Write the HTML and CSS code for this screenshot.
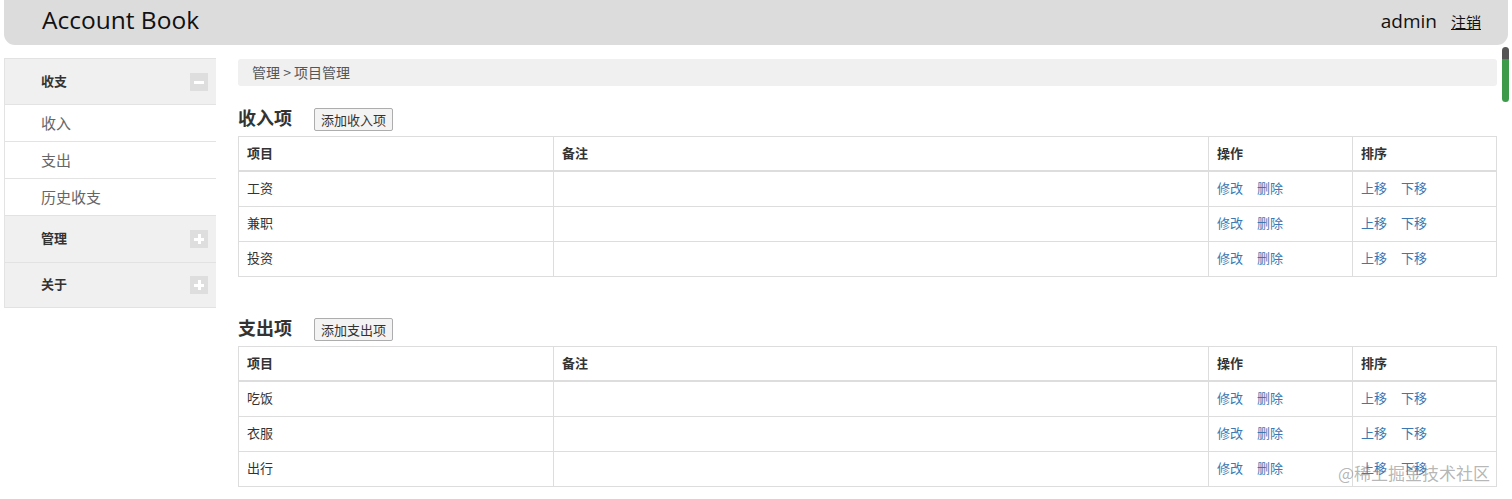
FILE: index.html
```html
<!DOCTYPE html>
<html lang="zh">
<head>
<meta charset="utf-8">
<title>Account Book</title>
<link rel="stylesheet" href="styles.css">
</head>
<body>
<header class="topbar">
  <div class="brand">Account Book</div>
  <div class="user">
    <span class="username">admin</span>
    <a class="logout" href="#">注销</a>
  </div>
</header>
<div class="scroll-thumb"></div>
<div class="layout">
  <aside class="sidebar">
    <div class="group">
      <div class="group-head"><span>收支</span><span class="toggle minus"></span></div>
      <a class="item" href="#">收入</a>
      <a class="item" href="#">支出</a>
      <a class="item" href="#">历史收支</a>
    </div>
    <div class="group">
      <div class="group-head"><span>管理</span><span class="toggle plus"></span></div>
    </div>
    <div class="group">
      <div class="group-head"><span>关于</span><span class="toggle plus"></span></div>
    </div>
  </aside>
  <main class="content">
    <div class="crumb">管理 &gt; 项目管理</div>

    <section class="block">
      <div class="block-head">
        <h2>收入项</h2>
        <button class="btn">添加收入项</button>
      </div>
      <table class="grid">
        <colgroup><col class="c1"><col class="c2"><col class="c3"><col class="c4"></colgroup>
        <thead><tr><th>项目</th><th>备注</th><th>操作</th><th>排序</th></tr></thead>
        <tbody>
          <tr><td>工资</td><td></td><td><a href="#">修改</a><a href="#">删除</a></td><td><a href="#">上移</a><a href="#">下移</a></td></tr>
          <tr><td>兼职</td><td></td><td><a href="#">修改</a><a href="#">删除</a></td><td><a href="#">上移</a><a href="#">下移</a></td></tr>
          <tr><td>投资</td><td></td><td><a href="#">修改</a><a href="#">删除</a></td><td><a href="#">上移</a><a href="#">下移</a></td></tr>
        </tbody>
      </table>
    </section>

    <section class="block second">
      <div class="block-head">
        <h2>支出项</h2>
        <button class="btn">添加支出项</button>
      </div>
      <table class="grid">
        <colgroup><col class="c1"><col class="c2"><col class="c3"><col class="c4"></colgroup>
        <thead><tr><th>项目</th><th>备注</th><th>操作</th><th>排序</th></tr></thead>
        <tbody>
          <tr><td>吃饭</td><td></td><td><a href="#">修改</a><a href="#">删除</a></td><td><a href="#">上移</a><a href="#">下移</a></td></tr>
          <tr><td>衣服</td><td></td><td><a href="#">修改</a><a href="#">删除</a></td><td><a href="#">上移</a><a href="#">下移</a></td></tr>
          <tr><td>出行</td><td></td><td><a href="#">修改</a><a href="#">删除</a></td><td><a href="#">上移</a><a href="#">下移</a></td></tr>
        </tbody>
      </table>
    </section>
  </main>
</div>
<div class="watermark">@稀土掘金技术社区</div>
</body>
</html>
```
FILE: styles.css
```css
html, body {
  margin: 0;
  padding: 0;
  background: #fff;
  overflow: hidden;
  height: 499px;
}
body {
  font-family: "Open Sans", "Noto Sans CJK SC", sans-serif;
  color: #333;
  position: relative;
}
a { text-decoration: none; }

.topbar {
  margin: 0 4px 0 4px;
  height: 45px;
  background: #dcdcdc;
  border-radius: 0 0 11px 11px;
  display: flex;
  align-items: center;
  justify-content: space-between;
  padding: 0 27px 0 38px;
}
.brand {
  font-size: 24.5px;
  color: #111;
  margin-top: -6px;
  font-family: "Open Sans", sans-serif;
}
.user {
  display: flex;
  align-items: baseline;
  gap: 14px;
  margin-top: -4px;
}
.username {
  font-size: 19px;
  color: #111;
}
.logout {
  font-family: "Noto Sans CJK SC", sans-serif;
  font-size: 15px;
  color: #111;
  text-decoration: underline;
}

.scroll-thumb {
  position: absolute;
  left: 1502px;
  top: 47px;
  width: 7px;
  height: 55px;
  border-radius: 4px;
  background: linear-gradient(#555 0, #555 12px, #3d9a4a 12px, #3d9a4a 100%);
}

.layout {
  display: flex;
  align-items: flex-start;
  margin-top: 13px;
  padding-left: 4px;
  gap: 22px;
}
.sidebar {
  width: 211px;
  flex: none;
  border-left: 1px solid #e3e3e3;
  font-family: "Noto Sans CJK SC", sans-serif;
}
.group-head {
  height: 45px;
  box-sizing: border-box;
  padding: 0 8px 3px 36px;
  background: #f0f0f0;
  border-top: 1px solid #e2e2e2;
  display: flex;
  align-items: center;
  justify-content: space-between;
  font-size: 13px;
  font-weight: bold;
  color: #333;
}
.group:first-child .group-head { height: 46px; }
.group:nth-child(2) .group-head { height: 47px; }
.group:last-child .group-head {
  height: 46px;
  border-bottom: 1px solid #e2e2e2;
}
.toggle {
  width: 18px;
  height: 18px;
  background: #dedede;
  position: relative;
  margin-top: 3px;
}
.toggle::before {
  content: "";
  position: absolute;
  left: 4px;
  top: 8px;
  width: 10px;
  height: 3px;
  background: #fff;
}
.toggle.plus::after {
  content: "";
  position: absolute;
  left: 8px;
  top: 4px;
  width: 3px;
  height: 10px;
  background: #fff;
}
.item {
  display: block;
  height: 36px;
  line-height: 35px;
  border-top: 1px solid #e3e3e3;
  padding-left: 36px;
  font-size: 15px;
  color: #666;
  background: #fff;
}

.content {
  flex: 1;
  margin-right: 15px;
  margin-top: 1px;
  font-family: "Noto Sans CJK SC", sans-serif;
}
.crumb {
  height: 27px;
  line-height: 27px;
  background: #f0f0f0;
  padding-left: 14px;
  font-size: 14px;
  color: #555;
  border-radius: 3px;
}
.block {
  margin-top: 22px;
}
.block.second {
  margin-top: 41px;
}
.block-head {
  display: flex;
  align-items: center;
  gap: 22px;
  height: 23px;
  margin-bottom: 5px;
}
.block-head h2 {
  margin: 0;
  padding-bottom: 5px;
  font-size: 18px;
  font-weight: bold;
  color: #333;
  line-height: 23px;
}
.btn {
  font-family: "Noto Sans CJK SC", sans-serif;
  font-size: 13px;
  color: #333;
  background: #f3f3f3;
  border: 1px solid #adadad;
  border-radius: 2px;
  height: 23px;
  padding: 0 6px;
  line-height: 20px;
}
.grid {
  width: 100%;
  border-collapse: collapse;
  table-layout: fixed;
  font-size: 13px;
}
.c1 { width: 315px; }
.c2 { width: 655px; }
.c3 { width: 144px; }
.c4 { width: auto; }
.grid th, .grid td {
  border: 1px solid #ddd;
  text-align: left;
  color: #333;
}
.grid td {
  height: 30px;
  padding: 0 8px 4px;
}
.grid th {
  height: 31px;
  padding: 0 8px 2px;
  font-weight: bold;
  border-bottom: 2px solid #ddd;
}
.grid td a {
  color: #3a77b3;
  margin-right: 14px;
}
.watermark {
  position: absolute;
  left: 1338px;
  top: 460px;
  font-family: "Noto Sans CJK SC", sans-serif;
  font-size: 17px;
  color: rgba(120,120,120,0.55);
}
```
